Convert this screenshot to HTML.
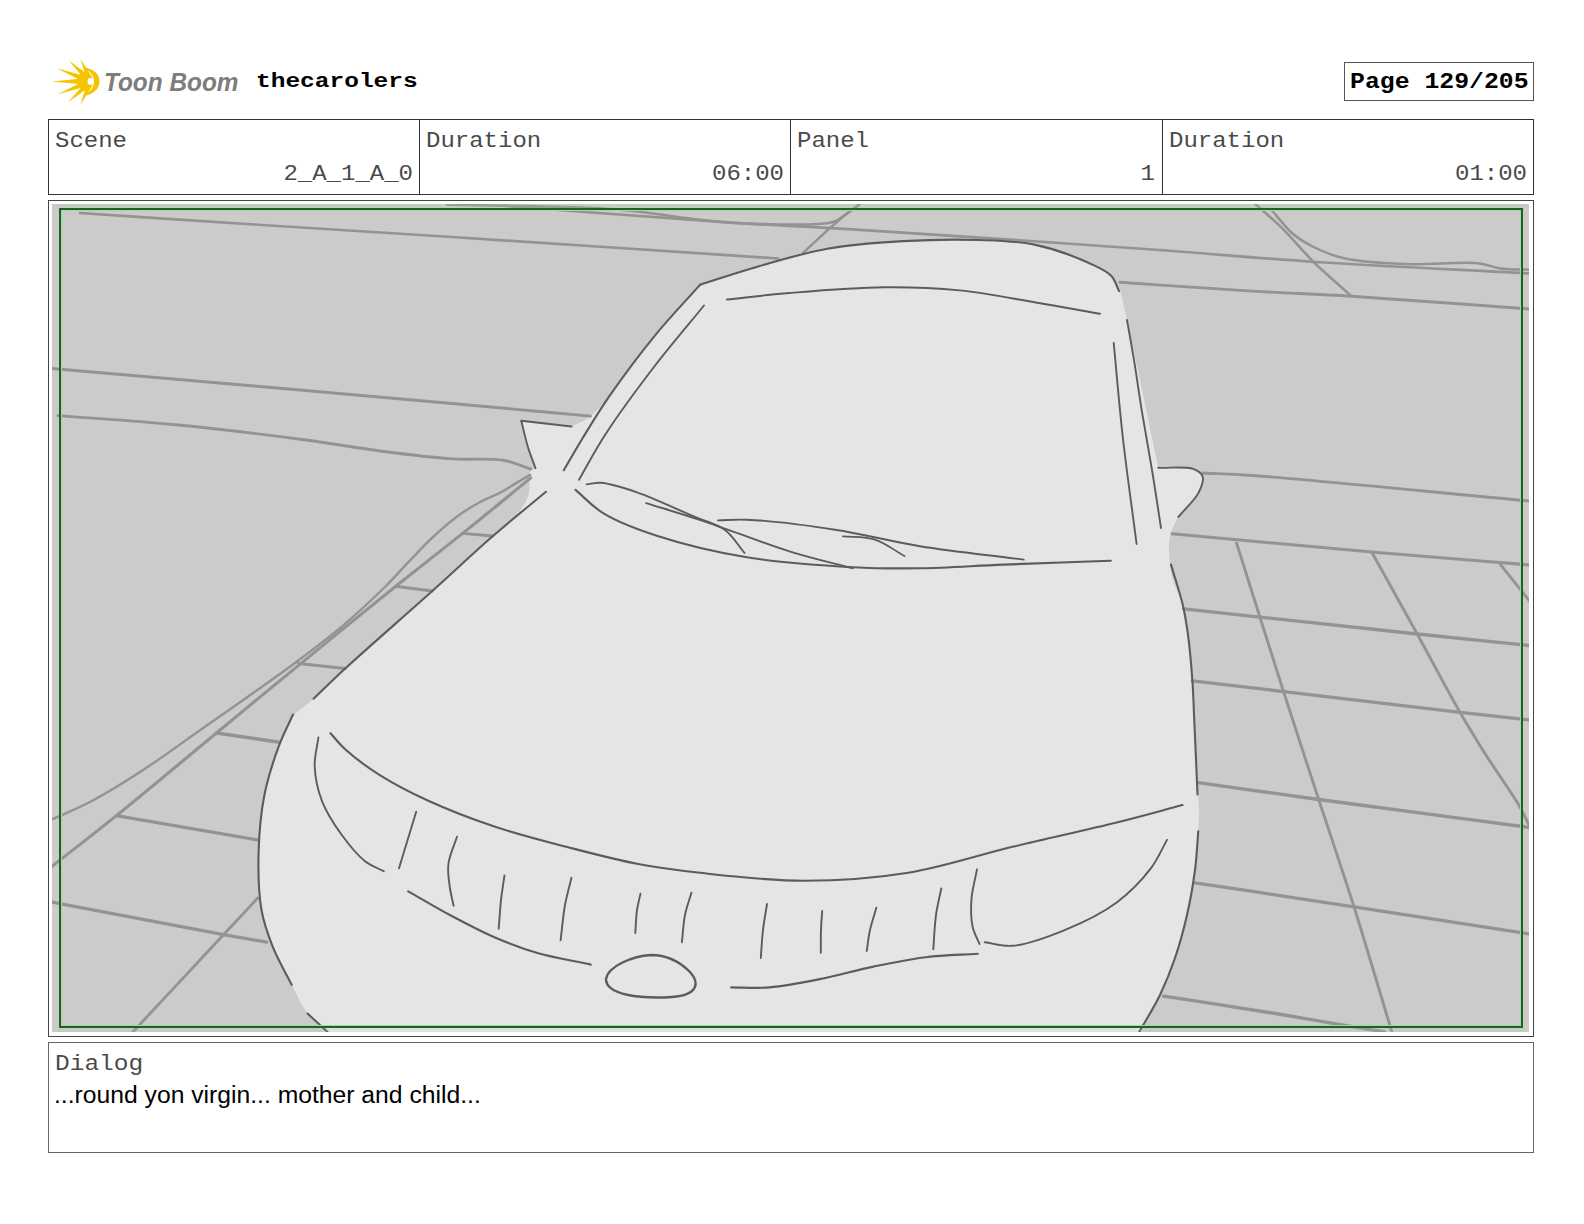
<!DOCTYPE html>
<html><head><meta charset="utf-8">
<style>
html,body{margin:0;padding:0;background:#fff;}
body{width:1584px;height:1224px;position:relative;overflow:hidden;font-family:"Liberation Mono",monospace;}
.abs{position:absolute;white-space:pre;}
.title{left:256px;top:67px;font-size:24.5px;font-weight:bold;line-height:28px;color:#000;transform:scale(1.0,0.85);transform-origin:0 20px;}
.pagebox{left:1344px;top:62px;width:188px;height:37px;border:1px solid #555;}
.pagetxt{left:1350px;top:67px;font-size:24.8px;font-weight:bold;line-height:28px;color:#000;transform:scale(1,0.88);transform-origin:0 20px;}
.tbl{left:48px;top:119px;width:1484px;height:74px;border:1px solid #333;}
.vl{top:119px;width:1px;height:76px;background:#333;}
.lbl{font-size:24px;line-height:28px;color:#4a4a4a;transform:scaleY(0.9);transform-origin:0 20px;}
.val{font-size:24px;line-height:28px;color:#4a4a4a;text-align:right;transform:scaleY(0.9);transform-origin:0 20px;}
.panelbox{left:48px;top:200px;width:1484px;height:835px;border:1px solid #444;}
.dialog{left:48px;top:1042px;width:1484px;height:109px;border:1px solid #666;}
.dtxt{left:54px;top:1081px;font-family:"Liberation Sans",sans-serif;font-size:24.7px;line-height:28px;color:#000;}
.tb{left:104px;top:67px;transform:scaleX(0.975);transform-origin:0 0;font-family:"Liberation Sans",sans-serif;font-style:italic;font-weight:bold;font-size:25px;line-height:30px;color:#7d7d7d;}
</style></head><body>
<svg class="abs" style="left:0;top:0" width="110" height="120" viewBox="0 0 110 120">
<g fill="#f5c400"><polygon points="68.6,60.3 87.2,82.5 91.9,77.6"/><polygon points="80.4,58.9 87.4,80.9 92.9,78.3"/><polygon points="56.6,68.2 87.9,83.9 90.4,77.5"/><polygon points="51.7,81.4 89.0,85.0 89.0,77.8"/><polygon points="57.8,94.2 90.4,85.3 87.9,78.9"/><polygon points="68.1,102.2 91.8,85.3 87.2,80.2"/><polygon points="80.4,104.9 92.9,84.5 87.4,82.0"/><path d="M83,67 C95,69 99.5,75 99.5,81.4 C99.5,88 95,94 83,96 C91,91 94,87 94,81.4 C94,76 91,72 83,67 Z"/><ellipse cx="90.5" cy="81.4" rx="3.0" ry="3.4" fill="#fff"/></g>
</svg>
<div class="abs tb">Toon Boom</div>
<div class="abs title">thecarolers</div>
<div class="abs pagebox"></div>
<div class="abs pagetxt">Page 129/205</div>

<div class="abs tbl"></div>
<div class="abs vl" style="left:419px"></div>
<div class="abs vl" style="left:790px"></div>
<div class="abs vl" style="left:1162px"></div>
<div class="abs lbl" style="left:55px;top:127px">Scene</div>
<div class="abs lbl" style="left:426px;top:127px">Duration</div>
<div class="abs lbl" style="left:797px;top:127px">Panel</div>
<div class="abs lbl" style="left:1169px;top:127px">Duration</div>
<div class="abs val" style="left:49px;width:364px;top:160px">2_A_1_A_0</div>
<div class="abs val" style="left:420px;width:364px;top:160px">06:00</div>
<div class="abs val" style="left:791px;width:364px;top:160px">1</div>
<div class="abs val" style="left:1163px;width:364px;top:160px">01:00</div>

<div class="abs panelbox"></div>
<svg class="abs" style="left:52px;top:204px" width="1477" height="828" viewBox="52 204 1477 828">
<rect x="52" y="204" width="1477" height="828" fill="#cbcbcb"/>
<path d="M700.0,284.0 C717.2,278.8 732.6,273.7 751.5,268.4 C774.3,262.0 801.9,253.3 827.3,248.7 C852.4,244.2 877.7,242.5 903.0,241.1 C928.2,239.7 955.4,239.2 978.8,240.0 C999.1,240.7 1016.9,240.9 1035.6,244.9 C1054.8,249.0 1078.8,258.2 1092.4,264.6 C1100.7,268.5 1106.6,271.0 1111.4,276.0 C1115.9,280.7 1117.8,287.3 1121.0,293.0 C1127.3,322.0 1133.8,350.9 1140.0,380.0 C1146.2,409.2 1152.1,438.5 1158.2,467.8 C1169.9,468.2 1185.5,466.1 1193.2,468.9 C1197.7,470.6 1201.4,472.9 1202.6,476.4 C1204.0,480.5 1201.4,487.0 1198.6,492.6 C1194.7,500.3 1185.1,508.8 1178.4,516.9 C1176.1,521.4 1173.2,525.6 1171.6,530.4 C1170.0,535.4 1169.1,540.2 1169.0,546.6 C1168.8,555.7 1170.4,569.8 1173.0,580.0 C1175.3,589.1 1180.4,595.0 1183.0,605.0 C1186.6,618.6 1188.2,637.3 1190.0,655.0 C1192.0,675.0 1192.7,696.8 1194.0,719.0 C1195.4,743.2 1197.5,778.4 1198.3,794.7 C1198.7,802.5 1199.0,806.1 1199.0,812.0 C1199.0,818.2 1198.8,823.7 1198.3,831.2 C1197.7,841.9 1196.8,856.6 1195.0,870.0 C1193.1,884.5 1190.4,900.3 1187.0,915.0 C1183.7,929.6 1179.7,944.3 1175.0,958.0 C1170.6,970.9 1165.8,982.8 1160.0,995.0 C1154.0,1007.5 1146.1,1019.7 1139.2,1032.0 L327.0,1032.0 C320.5,1025.8 313.2,1020.9 307.5,1013.5 C301.2,1005.4 297.1,995.1 291.7,984.8 C285.6,973.2 278.1,960.1 273.0,947.4 C268.1,935.1 264.0,924.0 261.5,910.0 C258.5,893.1 258.1,871.6 258.6,852.5 C259.1,833.3 260.8,813.2 264.4,795.0 C267.8,777.9 273.4,760.4 278.8,746.2 C283.2,734.5 288.5,725.5 293.4,715.2 L313.6,698.8 C324.1,688.7 331.9,680.8 345.2,668.5 C366.9,648.5 405.9,614.7 432.3,591.0 C454.4,571.2 483.9,544.5 492.9,536.0 C495.6,533.5 496.3,532.7 498.0,531.0 C503.9,525.9 510.7,521.7 515.7,515.8 C520.8,509.9 525.8,503.0 528.3,495.6 C530.9,487.9 528.1,474.0 530.8,470.3 C532.0,468.6 533.9,468.9 535.5,468.2 C533.0,461.2 530.3,454.7 528.0,447.3 C525.5,439.0 523.5,429.6 521.3,420.8 L571.5,426.5 C577.0,423.7 582.5,422.1 588.0,418.0 C595.0,412.8 601.2,405.8 609.2,396.4 C621.9,381.6 639.2,354.9 654.7,335.8 C669.5,317.6 684.9,301.3 700.0,284.0 Z" fill="#e5e5e5"/>
<g fill="none" stroke="#939393" stroke-linecap="round" stroke-linejoin="round"><path d="M80.0,213.0 C138.0,216.8 194.1,220.6 254.0,224.5 C317.9,228.6 388.7,232.9 452.0,237.0 C510.3,240.7 564.9,244.4 620.0,248.0 C673.5,251.5 725.3,255.0 778.0,258.5" stroke-width="2.7"/>
<path d="M46.0,368.0 C115.3,374.0 185.5,380.0 254.0,386.0 C320.8,391.8 391.9,398.1 452.0,403.5 C502.3,408.0 544.3,411.9 590.5,416.1" stroke-width="2.9"/>
<path d="M58.0,415.6 C98.0,418.7 137.4,421.0 178.0,425.0 C220.0,429.1 269.2,435.1 306.0,440.0 C334.1,443.7 355.4,447.8 380.0,451.0 C404.3,454.1 430.5,457.4 452.5,458.9 C470.8,460.1 488.8,457.8 503.0,460.2 C513.8,462.0 521.5,466.1 530.8,469.0" stroke-width="2.9"/>
<path d="M447.0,204.5 C503.7,206.2 571.7,206.0 617.0,209.5 C647.4,211.8 672.0,216.7 693.0,219.0 C707.8,220.6 715.2,222.0 731.0,222.7 C756.8,223.9 815.4,227.0 833.0,222.0 C839.8,220.1 841.6,216.9 846.0,214.0 C850.6,210.9 855.3,207.3 860.0,204.0" stroke-width="2.5"/>
<path d="M503.0,205.7 C579.0,211.4 666.9,218.6 731.0,222.7 C777.7,225.7 802.7,226.3 852.0,229.3 C929.7,234.0 1067.0,243.4 1152.0,249.5 C1214.9,254.0 1257.7,258.2 1316.0,262.0 C1382.6,266.3 1458.7,269.7 1530.0,273.5" stroke-width="2.7"/>
<path d="M860.0,204.0 C852.7,209.7 846.0,214.2 838.0,221.0 C827.5,229.8 814.7,242.3 803.0,253.0" stroke-width="2.5"/>
<path d="M1120.0,282.3 C1164.0,285.2 1211.1,288.7 1252.0,291.1 C1287.5,293.2 1313.5,293.9 1351.5,296.2 C1402.4,299.3 1470.5,304.7 1530.0,309.0" stroke-width="2.9"/>
<path d="M1255.5,204.0 C1264.8,212.4 1274.0,220.1 1283.3,229.3 C1293.4,239.3 1302.7,251.2 1313.6,262.0 C1325.3,273.5 1338.9,284.8 1351.5,296.2" stroke-width="2.5"/>
<path d="M1270.7,209.0 C1278.3,217.4 1285.6,227.7 1293.4,234.3 C1300.0,239.8 1306.0,243.2 1313.6,247.0 C1322.5,251.4 1331.9,255.5 1344.0,258.3 C1360.5,262.1 1383.3,263.2 1404.5,264.1 C1427.7,265.1 1460.4,261.5 1477.8,263.3 C1487.6,264.3 1492.4,267.3 1500.5,268.4 C1509.6,269.6 1520.2,269.3 1530.0,269.7" stroke-width="2.5"/>
<path d="M1203.0,473.0 C1219.3,473.8 1229.0,473.9 1252.0,475.5 C1306.8,479.4 1437.3,492.5 1530.0,501.0" stroke-width="2.9"/>
<path d="M530.1,474.9 C525.5,477.6 521.0,480.1 516.4,482.9 C511.5,485.8 507.0,489.0 501.5,492.0 C495.0,495.5 486.8,498.5 479.8,502.3 C472.7,506.1 466.2,509.9 459.2,514.9 C451.0,520.8 442.3,528.3 434.0,536.0 C425.1,544.2 416.1,554.1 407.7,562.9 C399.8,571.1 393.9,578.1 384.9,587.0 C372.9,598.8 356.3,614.3 341.4,626.9 C326.7,639.3 314.1,648.7 296.0,662.2 C270.1,681.4 228.2,710.5 200.0,730.3 C177.8,745.9 159.6,759.3 140.4,771.7 C123.1,782.9 106.4,793.3 89.9,802.0 C75.0,809.8 60.6,815.3 46.0,822.0" stroke-width="2.4"/>
<path d="M530.8,477.9 C508.1,496.4 485.2,515.3 462.6,533.4 C440.6,551.0 420.9,566.1 397.0,585.2 C368.0,608.5 332.1,637.9 301.0,663.4 C271.5,687.5 244.5,709.8 215.0,734.2 C183.6,760.1 147.8,790.3 117.7,814.6 C92.1,835.2 69.9,852.2 46.0,871.0" stroke-width="3.1"/>
<path d="M397.0,586.5 L432.3,591.0" stroke-width="2.9"/>
<path d="M462.6,533.4 L492.9,536.0" stroke-width="2.9"/>
<path d="M298.5,663.5 L345.2,668.5" stroke-width="3.1"/>
<path d="M216.4,732.9 L278.0,742.0" stroke-width="3.5"/>
<path d="M117.7,815.9 L257.8,839.9" stroke-width="3.3"/>
<path d="M46.0,901.0 C105.2,912.2 184.7,927.5 223.7,934.6 C242.9,938.1 252.3,939.6 266.6,942.1" stroke-width="3.3"/>
<path d="M257.8,898.0 C246.4,910.2 237.8,919.5 223.7,934.6 C200.7,959.3 163.1,999.5 132.8,1032.0" stroke-width="2.9"/>
<path d="M1172.2,533.8 C1238.7,539.9 1309.0,546.6 1371.7,552.0 C1427.5,556.8 1477.2,560.7 1530.0,565.0" stroke-width="3.1"/>
<path d="M1183.6,608.8 C1261.5,617.2 1353.3,627.3 1417.2,634.0 C1461.6,638.7 1492.4,641.7 1530.0,645.6" stroke-width="3.3"/>
<path d="M1192.4,680.8 C1281.6,691.3 1399.6,705.4 1460.0,712.3 C1490.9,715.8 1506.7,717.4 1530.0,720.0" stroke-width="3.3"/>
<path d="M1198.3,782.6 C1238.4,788.2 1272.9,793.3 1318.7,799.5 C1379.3,807.8 1459.6,818.2 1530.0,827.5" stroke-width="3.3"/>
<path d="M1195.0,882.8 C1248.0,890.8 1299.7,898.5 1354.0,906.8 C1411.2,915.5 1471.3,924.9 1530.0,934.0" stroke-width="3.3"/>
<path d="M1163.5,996.1 C1201.8,1002.1 1240.8,1007.9 1278.3,1014.0 C1314.4,1019.9 1349.0,1026.0 1384.3,1032.0" stroke-width="3.3"/>
<path d="M1236.6,543.1 C1252.2,592.4 1268.7,645.5 1283.3,690.9 C1295.8,729.9 1306.9,763.4 1318.7,799.5 C1330.5,835.4 1342.2,869.6 1354.0,906.8 C1366.6,946.9 1379.3,990.3 1391.9,1032.0" stroke-width="2.9"/>
<path d="M1371.7,552.0 C1386.9,579.3 1402.3,607.0 1417.2,634.0 C1431.7,660.4 1447.4,690.4 1460.0,712.3 C1469.3,728.5 1476.2,739.6 1485.3,754.0 C1495.4,770.0 1510.2,790.4 1518.2,804.0 C1523.4,813.0 1526.1,819.3 1530.0,827.0" stroke-width="2.9"/>
<path d="M1500.5,564.6 L1530.0,601.5" stroke-width="2.9"/></g>
<g fill="none" stroke="#5c5c5c" stroke-linecap="round" stroke-linejoin="round"><path d="M700.4,284.7 C717.4,279.3 732.7,273.8 751.5,268.4 C774.2,261.8 801.9,253.3 827.3,248.7 C852.4,244.2 877.7,242.5 903.0,241.1 C928.2,239.7 955.4,239.2 978.8,240.0 C999.1,240.7 1016.9,240.9 1035.6,244.9 C1054.8,249.0 1078.8,258.2 1092.4,264.6 C1100.7,268.5 1106.9,271.2 1111.4,276.0 C1115.3,280.2 1116.5,286.1 1119.0,291.1" stroke-width="2.1"/>
<path d="M700.2,284.6 C685.0,301.7 669.5,317.7 654.7,335.8 C639.1,354.8 622.0,377.9 609.2,396.4 C598.8,411.4 590.7,425.0 582.7,438.0 C575.8,449.4 570.1,459.5 563.8,470.2" stroke-width="2.1"/>
<path d="M704.0,305.5 C687.6,325.7 670.8,345.0 654.7,366.0 C638.0,387.8 619.0,413.5 605.5,434.2 C594.8,450.6 587.8,464.5 579.0,479.7" stroke-width="1.9"/>
<path d="M726.9,299.5 C747.7,297.3 766.4,294.9 789.4,293.0 C817.7,290.7 854.2,287.6 884.0,287.3 C910.7,287.0 934.6,287.9 959.8,290.4 C985.1,292.9 1011.4,298.4 1035.6,302.5 C1058.0,306.2 1078.5,310.0 1100.0,313.8" stroke-width="1.9"/>
<path d="M1127.0,320.0 C1129.3,333.3 1131.7,345.8 1134.0,360.0 C1136.7,376.2 1139.1,394.2 1142.0,412.0 C1145.1,430.8 1148.8,450.7 1152.0,470.0 C1155.2,489.3 1158.0,508.7 1161.0,528.0" stroke-width="1.9"/>
<path d="M1113.7,343.0 C1116.8,375.0 1119.3,406.3 1123.0,439.0 C1126.9,473.2 1132.1,509.0 1136.6,544.0" stroke-width="1.9"/>
<path d="M571.5,426.5 L521.3,420.8" stroke-width="1.9"/>
<path d="M521.3,420.8 C523.5,429.6 525.5,439.0 528.0,447.3 C530.3,454.7 533.0,461.2 535.5,468.2" stroke-width="1.9"/>
<path d="M1158.2,467.8 C1169.9,468.2 1185.5,466.1 1193.2,468.9 C1197.7,470.6 1201.4,472.9 1202.6,476.4 C1204.0,480.5 1201.4,487.0 1198.6,492.6 C1194.7,500.3 1185.1,508.8 1178.4,516.9" stroke-width="1.9"/>
<path d="M586.6,484.4 C591.4,483.9 595.1,482.4 600.9,482.8 C610.1,483.5 623.3,487.7 636.3,492.1 C653.3,497.9 677.5,509.5 693.7,516.4 C705.6,521.5 716.1,523.4 724.7,529.7 C732.9,535.7 737.9,545.2 744.5,552.9" stroke-width="1.9"/>
<path d="M646.2,503.1 C665.0,509.0 681.8,513.9 702.6,520.8 C728.8,529.5 764.0,543.5 791.0,551.8 C813.3,558.7 832.2,562.8 852.8,568.3" stroke-width="1.9"/>
<path d="M575.5,489.9 C584.7,497.6 591.7,506.1 603.1,513.1 C617.8,522.1 637.5,529.5 658.4,536.3 C684.1,544.7 715.8,552.2 746.8,557.3 C780.3,562.8 821.4,565.5 852.8,567.2 C877.7,568.6 896.4,568.6 920.0,568.3 C946.3,567.9 973.9,565.8 1003.5,564.6 C1037.0,563.3 1075.0,562.1 1110.8,560.8" stroke-width="2.1"/>
<path d="M718.0,520.4 C727.6,520.2 734.6,519.2 746.8,519.7 C768.2,520.6 806.0,525.2 835.1,529.7 C863.8,534.1 890.2,541.4 920.0,546.2 C952.8,551.5 989.1,555.1 1023.7,559.6" stroke-width="1.9"/>
<path d="M842.9,536.3 C853.6,537.4 864.7,536.4 874.9,539.6 C885.4,542.9 894.8,550.7 904.7,556.2" stroke-width="1.7"/>
<path d="M546.0,491.8 C528.3,506.5 511.0,520.3 492.9,536.0 C473.2,553.1 454.4,571.2 432.3,591.0 C405.9,614.7 366.9,648.5 345.2,668.5 C331.9,680.8 324.1,688.7 313.6,698.8" stroke-width="2.1"/>
<path d="M293.0,714.5 C288.3,725.1 283.2,734.3 278.8,746.2 C273.5,760.6 267.8,777.9 264.4,795.0 C260.8,813.2 259.1,833.3 258.6,852.5 C258.1,871.6 258.5,893.1 261.5,910.0 C264.0,924.0 268.1,935.1 273.0,947.4 C278.1,960.1 285.5,972.3 291.7,984.8" stroke-width="2.1"/>
<path d="M307.5,1013.5 L327.6,1032.0" stroke-width="2.1"/>
<path d="M318.4,737.5 C317.2,747.1 314.3,756.3 314.7,766.3 C315.1,777.3 317.6,789.6 321.9,800.8 C326.5,812.7 334.5,825.0 342.0,835.3 C349.0,844.9 357.2,855.0 365.0,861.2 C371.1,866.0 377.5,867.9 383.7,871.2" stroke-width="1.9"/>
<path d="M330.5,733.2 C335.3,738.5 338.7,743.4 344.9,749.0 C353.7,757.0 366.5,766.7 379.4,774.9 C394.0,784.1 410.5,792.7 428.3,800.8 C448.4,810.0 471.7,819.0 494.4,826.6 C517.7,834.4 542.3,840.6 566.3,846.8 C590.2,853.0 615.0,859.6 638.2,864.0 C659.5,868.1 676.7,870.2 700.0,872.8 C730.2,876.1 769.5,880.8 804.2,880.8 C838.9,880.8 873.8,878.4 908.3,872.8 C943.3,867.1 977.7,855.2 1012.5,846.8 C1047.2,838.4 1086.0,830.1 1116.7,822.5 C1141.2,816.4 1160.6,810.9 1182.6,805.1" stroke-width="2.1"/>
<path d="M416.2,811.7 L399.0,868.3" stroke-width="1.9"/>
<path d="M408.2,891.3 C422.6,899.5 436.8,908.1 451.3,915.8 C465.6,923.4 479.9,931.0 494.4,937.3 C508.6,943.4 522.2,948.7 537.5,953.1 C554.1,957.9 573.0,960.8 590.7,964.6" stroke-width="2.1"/>
<path d="M457.0,836.7 C454.1,845.8 449.5,855.2 448.4,864.0 C447.4,871.9 448.8,879.8 449.8,887.0 C450.7,893.6 452.3,899.5 453.6,905.7" stroke-width="1.9"/>
<path d="M504.5,875.5 C503.3,883.7 501.9,891.5 501.0,900.0 C500.0,909.2 499.5,919.1 498.7,928.7" stroke-width="1.9"/>
<path d="M571.5,877.8 C569.3,886.9 566.8,895.3 565.0,905.0 C563.0,915.9 562.1,928.5 560.6,940.2" stroke-width="1.9"/>
<path d="M640.5,893.6 C639.3,899.1 637.9,904.0 637.0,910.0 C636.0,917.0 635.9,925.3 635.3,933.0" stroke-width="1.9"/>
<path d="M691.4,892.7 C689.3,900.1 686.6,907.1 685.0,915.0 C683.3,923.6 682.9,933.1 681.9,942.2" stroke-width="1.9"/>
<path d="M767.0,904.0 C765.7,912.7 764.0,921.2 763.0,930.0 C761.9,939.1 761.5,948.7 760.8,958.0" stroke-width="1.9"/>
<path d="M822.2,911.0 C821.8,917.3 821.2,923.4 821.0,930.0 C820.7,937.2 820.9,945.1 820.8,952.7" stroke-width="1.9"/>
<path d="M876.4,907.6 C874.3,915.1 871.6,922.6 870.0,930.0 C868.4,937.1 867.8,944.0 866.7,951.0" stroke-width="1.9"/>
<path d="M941.3,888.5 C939.5,897.3 937.3,905.6 936.0,915.0 C934.5,925.7 934.2,937.9 933.3,949.3" stroke-width="1.9"/>
<path d="M731.2,987.4 C743.9,987.4 755.7,988.5 769.4,987.4 C785.5,986.1 804.2,982.3 821.5,978.8 C838.9,975.3 856.2,970.2 873.6,966.6 C890.9,963.0 908.3,959.3 925.7,957.2 C943.0,955.1 960.4,954.9 977.8,953.8" stroke-width="2.1"/>
<path d="M977.0,869.4 C975.2,879.2 972.2,889.2 971.5,898.9 C970.8,908.3 970.9,918.7 972.6,926.7 C974.0,933.3 977.2,938.2 979.5,944.0" stroke-width="1.9"/>
<path d="M984.7,942.3 C994.0,943.5 1001.9,946.7 1012.5,945.8 C1027.3,944.6 1047.6,937.1 1064.6,930.1 C1082.3,922.8 1101.8,913.5 1116.7,902.4 C1130.3,892.3 1142.7,879.1 1151.4,867.6 C1158.4,858.3 1161.8,849.1 1167.0,839.9" stroke-width="1.9"/>
<path d="M1171.0,564.6 C1174.9,578.1 1180.0,593.0 1182.8,605.0 C1185.0,614.4 1186.0,620.4 1187.4,630.3 C1189.4,644.2 1191.3,665.2 1192.4,680.8 C1193.4,694.3 1193.5,703.8 1194.2,718.6 C1195.2,739.5 1196.4,769.1 1197.5,794.4" stroke-width="2.1"/>
<path d="M1198.3,831.2 C1197.2,844.1 1196.8,856.6 1195.0,870.0 C1193.1,884.5 1190.4,900.3 1187.0,915.0 C1183.7,929.6 1179.7,944.3 1175.0,958.0 C1170.6,970.9 1165.8,982.8 1160.0,995.0 C1154.0,1007.5 1146.1,1019.7 1139.2,1032.0" stroke-width="2.1"/><path d="M606,979 C608,966 633,956 651,955 C668,955 681,963 690,972 C700,983 698,995 672,997 C640,999 606,995 606,979 Z" stroke-width="2.4"/></g>
<rect x="58" y="204" width="1468" height="4" fill="#96e696" fill-opacity="0.18"/><rect x="58" y="1028" width="1468" height="4" fill="#96e696" fill-opacity="0.15"/><rect x="61.5" y="210.5" width="1459" height="815" fill="none" stroke="#a6d6a6" stroke-width="1"/><rect x="60" y="209" width="1462" height="818" fill="none" stroke="#1e621e" stroke-width="2"/>
</svg>

<div class="abs dialog"></div>
<div class="abs lbl" style="left:55px;top:1050px;font-size:24.5px">Dialog</div>
<div class="abs dtxt">...round yon virgin... mother and child...</div>
</body></html>
